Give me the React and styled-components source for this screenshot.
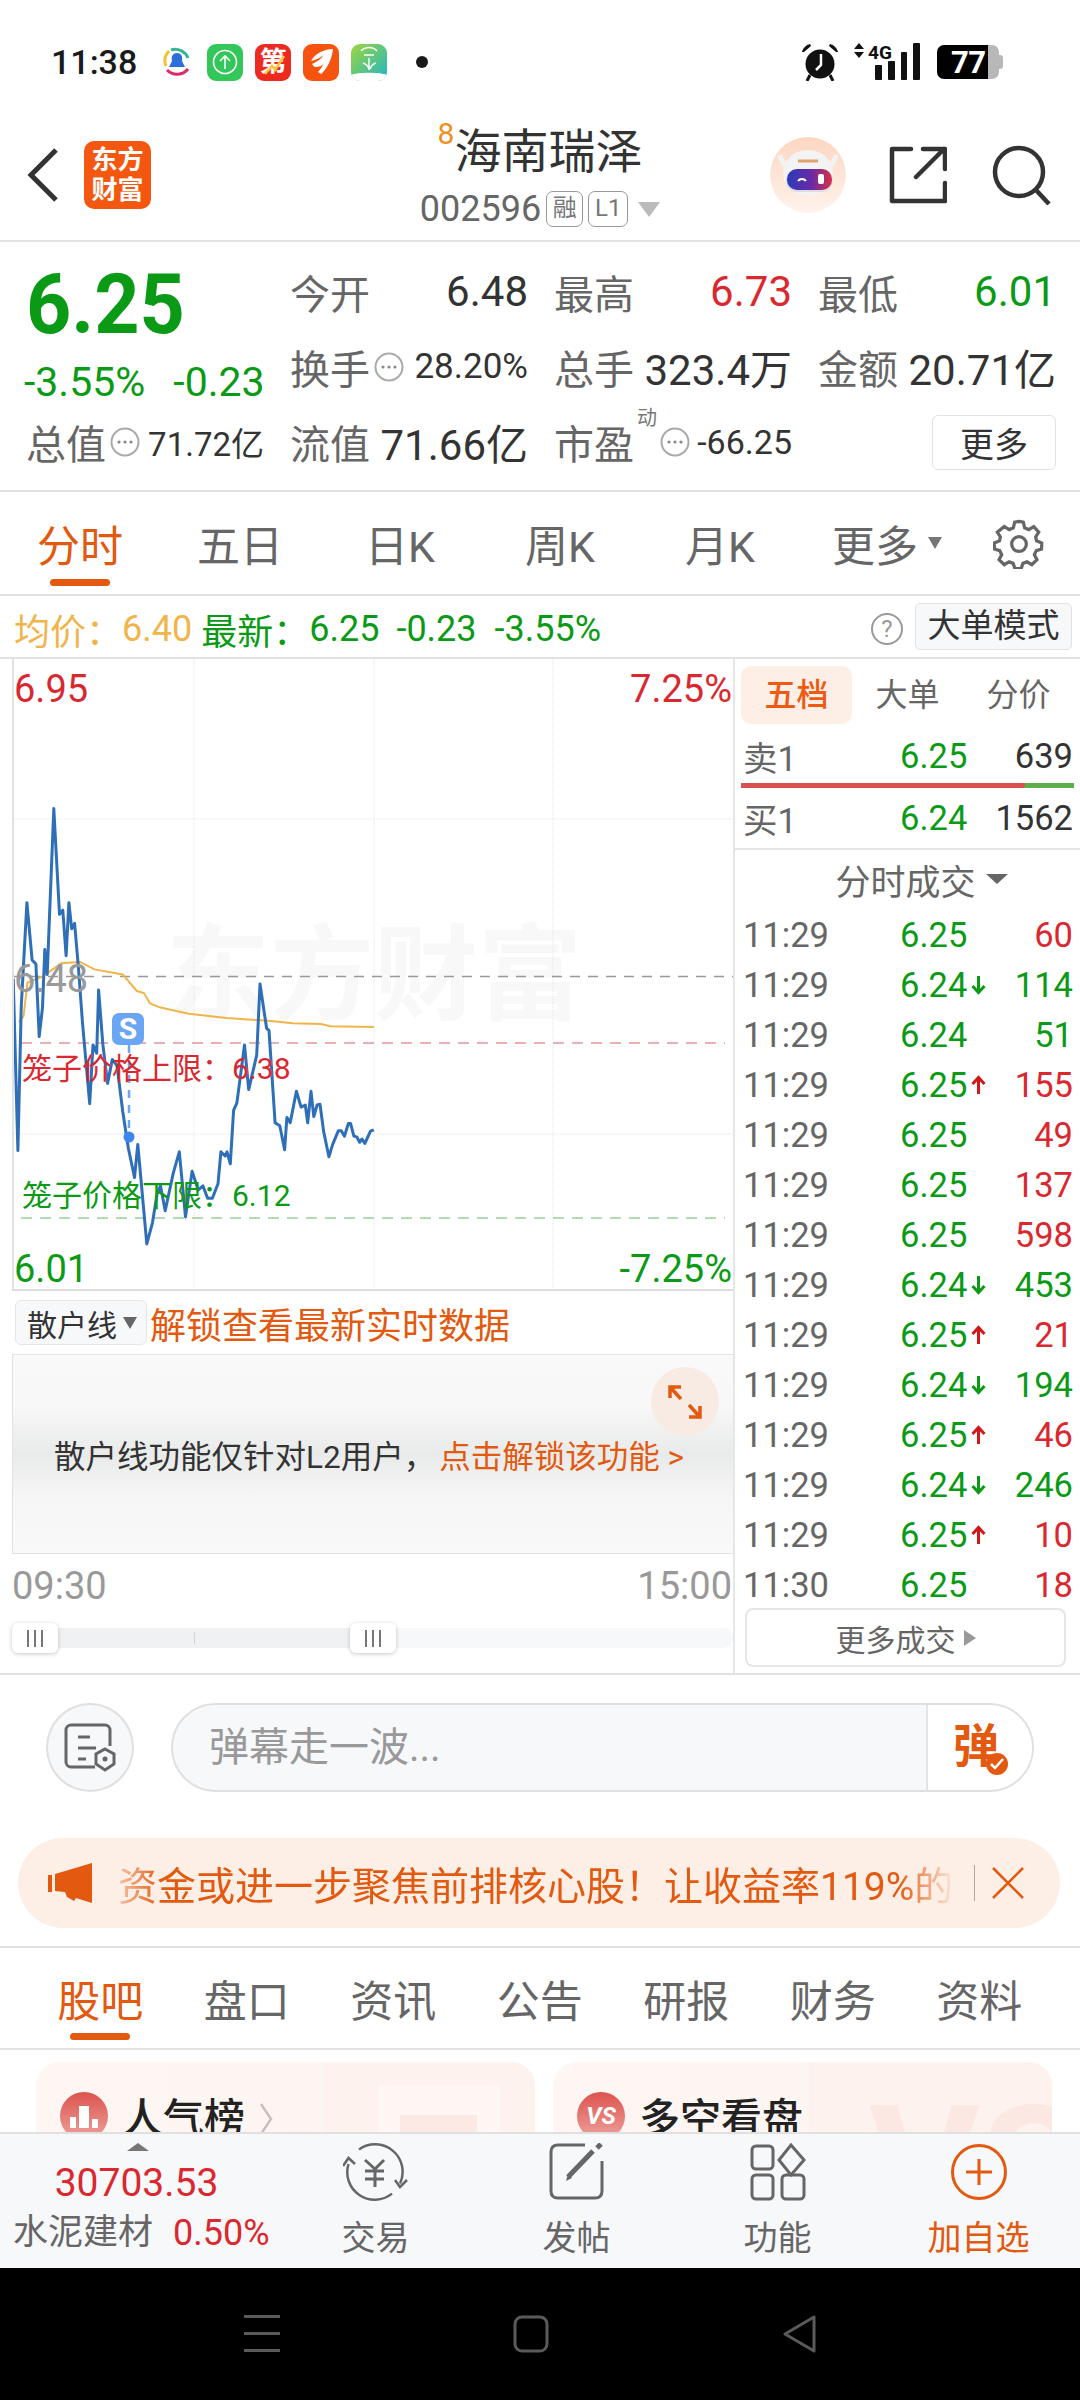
import React from "react";
import styled, { createGlobalStyle } from "styled-components";

const GREEN = "#0b9a16";
const RED = "#d9282f";
const ORANGE = "#e2590f";

const GlobalStyle = createGlobalStyle`
  html, body {
    margin: 0;
    padding: 0;
    background: #fff;
  }
  body {
    font-family: Roboto, "Noto Sans CJK SC", sans-serif;
  }
  * { box-sizing: border-box; }
`;

const Page = styled.div`
  width: 1080px;
  height: 2400px;
  display: flex;
  flex-direction: column;
  overflow: hidden;
  background: #fff;
  color: #333;
`;

/* status bar */
const StatusBar = styled.div`
  height: 110px;
  padding: 14px 81px 0 51px;
  display: flex;
  align-items: center;
`;

const Clock = styled.span`
  font-size: 34px;
  font-weight: 500;
  color: #1a1a1a;
  width: 112px;
`;

const NotifyIcons = styled.div`
  display: flex;
  align-items: center;
  gap: 12px;
`;

const ChatIcon = styled.svg`
  margin-right: 4px;
`;

const NotifyIcon = styled.div`
  position: relative;
  width: 36px;
  height: 37px;
  border-radius: 9px;
  background: ${(p) => p.$bg};
  display: flex;
  align-items: center;
  justify-content: center;
  overflow: hidden;
`;

const NotifyChar = styled.span`
  color: #fff;
  font-size: 27px;
  font-weight: 700;
  line-height: 37px;
`;

const NotifySlash = styled.svg`
  position: absolute;
  left: 8px;
  top: 10px;
`;

const NotifyDot = styled.div`
  width: 12px;
  height: 12px;
  margin-left: 17px;
  border-radius: 50%;
  background: #1a1a1a;
`;

const StatusRight = styled.div`
  margin-left: auto;
  display: flex;
  align-items: center;
  gap: 15px;
`;

const Battery = styled.div`
  position: relative;
  width: 62px;
  height: 34px;
  margin-left: 2px;
  border-radius: 7px;
  background: linear-gradient(to right, #000 82%, #b8b8b8 82%);
  color: #fff;
  font-size: 31px;
  font-weight: 700;
  padding-left: 14px;
  line-height: 35px;
  letter-spacing: -0.5px;
  &::after {
    content: "";
    position: absolute;
    right: -4px;
    top: 10px;
    width: 4px;
    height: 14px;
    border-radius: 0 3px 3px 0;
    background: #b8b8b8;
  }
`;

/* header */
const Header = styled.div`
  height: 132px;
  display: grid;
  grid-template-columns: 1fr auto 1fr;
  align-items: center;
  border-bottom: 2px solid #e2e2e2;
`;

const HeaderLeft = styled.div`
  display: flex;
  align-items: center;
  padding-left: 26px;
  gap: 24px;
`;

const Logo = styled.div`
  width: 67px;
  height: 68px;
  border-radius: 10px;
  background: #f4570f;
  color: #fff;
  font-size: 26px;
  font-weight: 700;
  line-height: 30px;
  text-align: center;
  padding: 4px 4px;
`;

const TitleBlock = styled.div`
  display: flex;
  flex-direction: column;
  align-items: center;
`;

const Title = styled.div`
  display: flex;
  align-items: flex-start;
  font-size: 47px;
  line-height: 62px;
  color: #333;
  sup {
    font-size: 30px;
    line-height: 30px;
    color: #ef8f22;
    margin-top: -2px;
  }
`;

const CodeRow = styled.div`
  display: flex;
  align-items: center;
  gap: 5px;
  margin-top: 6px;
  color: #666;
  font-size: 36px;
  line-height: 40px;
`;

const CodeBadge = styled.span`
  height: 36px;
  min-width: ${(p) => p.$w || 37}px;
  border: 1.5px solid #999;
  border-radius: 7px;
  font-size: 24px;
  line-height: 33px;
  text-align: center;
  color: #777;
`;

const DownTriangle = styled.span`
  width: 0;
  height: 0;
  margin-left: ${(p) => p.$gap || 0}px;
  border-left: ${(p) => p.$w || 11}px solid transparent;
  border-right: ${(p) => p.$w || 11}px solid transparent;
  border-top: ${(p) => p.$h || 15}px solid ${(p) => p.$color || "#bbb"};
`;

const HeaderRight = styled.div`
  display: flex;
  align-items: center;
  justify-content: flex-end;
  padding-right: 28px;
  gap: 43px;
`;

const SearchIcon = styled.svg`
  margin-left: 2px;
`;

/* quote */
const Quote = styled.div`
  height: 250px;
  padding: 12px 0 0 26px;
  display: grid;
  grid-template-columns: repeat(4, 238px);
  grid-auto-rows: 75px;
  column-gap: 26px;
  border-bottom: 2px solid #e2e2e2;
`;

const PriceBlock = styled.div`
  grid-row: 1 / 3;
  display: flex;
  flex-direction: column;
`;

const BigPrice = styled.div`
  font-size: 79px;
  font-weight: 700;
  color: ${GREEN};
  line-height: 90px;
  margin-top: 5px;
  transform: scaleY(1.06);
  transform-origin: left center;
`;

const ChangeRow = styled.div`
  display: flex;
  gap: 28px;
  margin: 9px 0 0 -2px;
  font-size: 41px;
  line-height: 48px;
  color: ${GREEN};
`;

const Stat = styled.div`
  display: flex;
  align-items: center;
  gap: 4px;
  height: 75px;
`;

const StatLabel = styled.span`
  font-size: 40px;
  color: #666;
  white-space: nowrap;
  position: relative;
`;

const StatValue = styled.span`
  margin-left: auto;
  font-size: ${(p) => p.$size || 42}px;
  color: ${(p) => p.$color || "#333"};
  white-space: nowrap;
`;

const DynamicMark = styled.sup`
  position: absolute;
  left: 83px;
  top: -6px;
  font-size: 20px;
  line-height: 22px;
  color: #777;
`;

const MarkSpacer = styled.span`
  width: 18px;
`;

const MoreButton = styled.button`
  width: 124px;
  height: 55px;
  margin-left: auto;
  margin-top: 1px;
  background: #fff;
  border: 1.5px solid #e2e2e2;
  border-radius: 6px;
  font: inherit;
  font-size: 34px;
  color: #333;
  padding: 0;
`;

/* period tabs */
const PeriodTabs = styled.div`
  height: 104px;
  display: flex;
  align-items: center;
  border-bottom: 2px solid #e2e2e2;
`;

const TabGrid = styled.div`
  display: grid;
  grid-template-columns: repeat(6, 160px);
  height: 100%;
`;

const Tab = styled.div`
  position: relative;
  display: flex;
  align-items: center;
  justify-content: center;
  gap: 10px;
  padding-left: ${(p) => p.$shift || 0}px;
  font-size: 43px;
  color: ${(p) => (p.$active ? ORANGE : "#666")};
`;

const TabLine = styled.span`
  position: absolute;
  left: 50%;
  bottom: ${(p) => p.$bottom}px;
  width: 60px;
  height: 7px;
  margin-left: -30px;
  border-radius: 4px;
  background: ${ORANGE};
`;

const GearWrap = styled.div`
  margin-left: 33px;
  display: flex;
`;

/* info row */
const InfoRow = styled.div`
  height: 63px;
  padding: 4px 8px 0 14px;
  display: flex;
  align-items: center;
  font-size: 36px;
  border-bottom: 2px solid #e2e2e2;
`;

const InfoText = styled.span`
  color: ${(p) => p.$color};
  margin-right: ${(p) => p.$gap || 0}px;
  white-space: nowrap;
`;

const HelpIcon = styled.span`
  margin-left: auto;
  width: 32px;
  height: 32px;
  border: 2px solid #999;
  border-radius: 50%;
  color: #999;
  font-size: 24px;
  line-height: 28px;
  text-align: center;
`;

const ModeButton = styled.div`
  width: 157px;
  height: 47px;
  margin: -4px 0 0 12px;
  border: 1.5px solid #e2e2e2;
  border-radius: 5px;
  background: #f7f8fa;
  color: #333;
  font-size: 33px;
  line-height: 44px;
  text-align: center;
`;

/* chart + trade panel */
const Main = styled.div`
  height: 1016px;
  display: flex;
  border-bottom: 2px solid #e2e2e2;
`;

const LeftCol = styled.div`
  width: 735px;
  padding-left: 12px;
  display: flex;
  flex-direction: column;
`;

const Chart = styled.div`
  position: relative;
  height: 632px;
  border-left: 2px solid #e2e2e2;
  border-bottom: 2px solid #dcdcdc;
  overflow: hidden;
`;

const ChartSvg = styled.svg`
  position: absolute;
  left: -2px;
  top: 0;
`;

const Watermark = styled.div`
  position: absolute;
  left: 152px;
  top: 262px;
  font-size: 104px;
  font-weight: 700;
  line-height: 112px;
  color: #f8f8f8;
  white-space: nowrap;
`;

const ChartPrice = styled.span`
  position: absolute;
  top: ${(p) => p.$top}px;
  ${(p) => (p.$right ? "right: 1px;" : "left: 0;")}
  font-size: 38px;
  line-height: 44px;
  color: ${(p) => p.$color};
`;

const CageLabel = styled.span`
  position: absolute;
  left: 8px;
  top: ${(p) => p.$top}px;
  font-size: 30px;
  line-height: 36px;
  color: ${(p) => p.$color};
  white-space: nowrap;
`;

const SMark = styled.div`
  position: absolute;
  left: 98px;
  top: 354px;
  width: 32px;
  height: 32px;
  border-radius: 7px;
  background: #6aa6f4;
  color: #fff;
  font-size: 30px;
  font-weight: 700;
  line-height: 32px;
  text-align: center;
`;

const SubRow = styled.div`
  height: 63px;
  display: flex;
  align-items: center;
  gap: 3px;
  padding-left: 3px;
`;

const SubSelect = styled.div`
  width: 132px;
  height: 45px;
  display: flex;
  align-items: center;
  justify-content: space-between;
  padding: 0 9px 0 11px;
  border: 1px solid #e6e6e6;
  border-radius: 6px;
  background: #f7f8fa;
  font-size: 30px;
`;

const UnlockText = styled.span`
  font-size: 36px;
  color: ${ORANGE};
`;

const LockPanel = styled.div`
  position: relative;
  height: 200px;
  display: flex;
  align-items: center;
  padding: 0 0 0 41px;
  border: 1px solid #e2e2e2;
  border-right: none;
  background:
    linear-gradient(to bottom, #f8f9f8 0%, #f7f8f7 25%, #e9eaea 50%, #f6f6f6 72%, #f9f9f9 100%);
  font-size: 31.5px;
  color: #333;
  white-space: nowrap;
`;

const LockLink = styled.span`
  margin-left: 4px;
  color: ${ORANGE};
`;

const ExpandBadge = styled.div`
  position: absolute;
  top: 12px;
  right: 14px;
  width: 68px;
  height: 69px;
  border-radius: 50%;
  background: #f8ebe3;
  display: flex;
  align-items: center;
  justify-content: center;
`;

const TimeRow = styled.div`
  height: 60px;
  display: flex;
  align-items: center;
  justify-content: space-between;
  padding: 3px 1px 0 0;
  font-size: 38px;
  color: #999;
`;

const Slider = styled.div`
  position: relative;
  height: 20px;
  margin-top: 14px;
  border-radius: 10px;
  background: linear-gradient(to right, #f0f1f3 48%, #f7f8fa 48%);
`;

const SliderTick = styled.span`
  position: absolute;
  left: 182px;
  top: 4px;
  width: 1px;
  height: 12px;
  background: #d4d4d4;
`;

const SliderHandle = styled.div`
  position: absolute;
  left: ${(p) => p.$left}px;
  top: -5px;
  width: 46px;
  height: 30px;
  border-radius: 6px;
  background: #fff;
  box-shadow: 0 1px 4px rgba(0, 0, 0, 0.22);
  display: flex;
  align-items: center;
  justify-content: center;
  gap: 5px;
  i {
    width: 2px;
    height: 17px;
    background: #777;
  }
`;

const RightCol = styled.div`
  flex: 1;
  display: flex;
  flex-direction: column;
  border-left: 2px solid #e6e6e6;
  padding: 0 6px 0 6px;
`;

const BookTabs = styled.div`
  display: grid;
  grid-template-columns: repeat(3, 111px);
  padding-top: 7px;
  height: 71px;
`;

const BookTab = styled.div`
  height: 58px;
  border-radius: 10px;
  background: ${(p) => (p.$active ? "#fdeee6" : "transparent")};
  color: ${(p) => (p.$active ? "#ee5a12" : "#666")};
  font-size: 32px;
  font-weight: ${(p) => (p.$active ? 500 : 400)};
  line-height: 58px;
  text-align: center;
`;

const BookRow = styled.div`
  height: ${(p) => p.$h}px;
  display: grid;
  grid-template-columns: 157px 1fr auto;
  align-items: center;
  padding: 0 1px 0 2px;
  font-size: 34.5px;
  color: #333;
`;

const BookLabel = styled.span`
  color: #666;
`;

const BookPrice = styled.span`
  color: ${GREEN};
`;

const BookBar = styled.div`
  height: 5px;
  margin-top: 1px;
  background: linear-gradient(105deg, #d9504f 85%, #5cad4e 85%);
`;

const TradeHeading = styled.div`
  height: 60px;
  margin: 0 -6px;
  border-top: 2px solid #e6e6e6;
  display: flex;
  align-items: center;
  justify-content: center;
  gap: 10px;
  padding-left: 28px;
  font-size: 35px;
  color: #666;
`;

const TradeList = styled.div`
  display: flex;
  flex-direction: column;
  gap: 10px;
  padding-top: 7px;
  height: 700px;
`;

const TradeRow = styled.div`
  height: 40px;
  display: grid;
  grid-template-columns: 157px 1fr auto;
  align-items: center;
  padding: 0 1px 0 2px;
  font-size: 34.5px;
`;

const TradeTime = styled.span`
  color: #666;
`;

const TradePrice = styled.span`
  display: flex;
  align-items: center;
  gap: 4px;
  color: ${GREEN};
`;

const TradeVolume = styled.span`
  color: ${(p) => (p.$up ? RED : GREEN)};
`;

const MoreTrades = styled.div`
  height: 59px;
  margin: 0 0 0 4px;
  width: 321px;
  border: 2px solid #e6e6e6;
  border-radius: 8px;
  display: flex;
  align-items: center;
  justify-content: center;
  gap: 8px;
  font-size: 30px;
  color: #666;
`;

const RightTriangle = styled.span`
  width: 0;
  height: 0;
  border-top: 8px solid transparent;
  border-bottom: 8px solid transparent;
  border-left: 12px solid #999;
`;

/* danmu */
const DanmuRow = styled.div`
  height: 153px;
  display: flex;
  align-items: flex-start;
  padding: 28px 46px 0;
  gap: 37px;
`;

const RoundIcon = styled.div`
  width: 88px;
  height: 89px;
  flex: none;
  border: 2px solid #e0e0e0;
  border-radius: 50%;
  background: #f7f8fa;
  display: flex;
  align-items: center;
  justify-content: center;
`;

const DanmuInput = styled.div`
  width: 863px;
  height: 89px;
  display: flex;
  border: 2px solid #e0e0e0;
  border-radius: 45px;
  background: #f7f8fa;
  overflow: hidden;
`;

const DanmuPlaceholder = styled.div`
  flex: 1;
  padding-left: 36px;
  font-size: 40px;
  line-height: 85px;
  color: #999;
`;

const DanmuSend = styled.div`
  width: 106px;
  border-left: 2px solid #e4e4e4;
  background: #fff;
  position: relative;
  color: ${ORANGE};
  font-size: 46px;
  font-weight: 700;
  line-height: 82px;
  padding-left: 25px;
`;

const SendCheck = styled.span`
  position: absolute;
  left: 58px;
  top: 48px;
  width: 22px;
  height: 22px;
  border-radius: 50%;
  background: ${ORANGE};
  display: flex;
  align-items: center;
  justify-content: center;
`;

/* banner */
const Banner = styled.div`
  height: 90px;
  margin: 10px 20px 0 18px;
  display: flex;
  align-items: center;
  padding-left: 30px;
  border-radius: 45px;
  background: #fdeee6;
`;

const BannerText = styled.div`
  width: 832px;
  margin-left: 25px;
  overflow: hidden;
  white-space: nowrap;
  font-size: 39px;
  color: ${ORANGE};
  -webkit-mask-image: linear-gradient(to right, rgba(0, 0, 0, 0.3) 0, #000 44px, #000 780px, rgba(0, 0, 0, 0.1) 832px);
  mask-image: linear-gradient(to right, rgba(0, 0, 0, 0.3) 0, #000 44px, #000 780px, rgba(0, 0, 0, 0.1) 832px);
`;

const BannerClose = styled.div`
  margin-left: 24px;
  height: 36px;
  padding-left: 16px;
  border-left: 1.5px solid #b5a59b;
  display: flex;
  align-items: center;
`;

/* section tabs */
const SectionTabs = styled.div`
  height: 104px;
  margin-top: 18px;
  padding-left: 27px;
  display: grid;
  grid-template-columns: repeat(7, 146.5px);
  border-top: 2px solid #e2e2e2;
  border-bottom: 2px solid #e2e2e2;
`;

/* cards */
const CardsArea = styled.div`
  flex: 1;
  min-height: 0;
  overflow: hidden;
  padding: 12px 28px 0 36px;
  display: grid;
  grid-template-columns: 499px 499px;
  column-gap: 18px;
`;

const Card = styled.div`
  height: 100px;
  border-radius: 24px 24px 0 0;
  padding: 30px 0 0 24px;
  background: linear-gradient(to right, #fdf6f3, #fdf4f1);
  display: flex;
  align-items: flex-start;
  gap: 14px;
  position: relative;
  overflow: hidden;
`;

const CardGhost = styled.div`
  position: absolute;
  right: 0;
  top: 0;
  width: ${(p) => p.$w}px;
  height: 100%;
  background: #fdf2ee;
`;

const GhostSquare = styled.div`
  position: absolute;
  left: ${(p) => p.$left}px;
  top: ${(p) => p.$top}px;
  width: ${(p) => p.$w}px;
  height: 60px;
  background: ${(p) => p.$bg};
`;

const GhostMark = styled.div`
  position: absolute;
  left: 316px;
  top: 22px;
  height: 78px;
  overflow: hidden;
  font-size: 170px;
  font-weight: 700;
  line-height: 170px;
  color: #fbe8e3;
`;

const CardIcon = styled.div`
  width: 48px;
  height: 48px;
  flex: none;
  border-radius: 50%;
  background: linear-gradient(to bottom, #dc534e, #eea29c);
  color: #fff;
  font-size: 24px;
  font-weight: 700;
  font-style: italic;
  line-height: 46px;
  text-align: center;
  display: flex;
  align-items: center;
  justify-content: center;
  z-index: 1;
`;

const CardTitle = styled.div`
  margin-top: 3px;
  font-size: 41px;
  font-weight: 500;
  line-height: 48px;
  color: #222;
  z-index: 1;
  display: flex;
  gap: 14px;
  align-items: center;
`;

/* bottom bar */
const BottomBar = styled.div`
  height: 136px;
  flex: none;
  display: grid;
  grid-template-columns: 275px repeat(4, 201px);
  border-top: 2px solid #e0e0e0;
  background: #f7f8fa;
`;

const IndexBlock = styled.div`
  position: relative;
  padding: 26px 0 0 13px;
  text-align: center;
  white-space: nowrap;
`;

const IndexUp = styled.span`
  position: absolute;
  left: 127px;
  top: 9px;
  width: 0;
  height: 0;
  border-left: 11px solid transparent;
  border-right: 11px solid transparent;
  border-bottom: 8px solid #777;
`;

const IndexValue = styled.div`
  font-size: 39px;
  line-height: 46px;
  color: ${RED};
  padding-right: 15px;
`;

const IndexName = styled.div`
  display: flex;
  align-items: center;
  gap: 20px;
  margin-top: 3px;
  font-size: 35px;
  line-height: 48px;
  color: #666;
  span {
    color: ${RED};
    font-size: 36px;
  }
`;

const ActionItem = styled.div`
  display: flex;
  flex-direction: column;
  align-items: center;
  padding-top: 9px;
  font-size: 34px;
  color: ${(p) => (p.$active ? ORANGE : "#666")};
  span {
    margin-top: 14px;
    line-height: 46px;
  }
`;

const ActionIcon = styled.svg`
  display: block;
`;

/* nav bar */
const NavBar = styled.div`
  height: 132px;
  flex: none;
  background: #000;
  display: flex;
  align-items: center;
  padding: 0 0 0 244px;
  gap: 233px;
`;

const trades = [
  ["11:29", "6.25", "", "60", 1],
  ["11:29", "6.24", "d", "114", 0],
  ["11:29", "6.24", "", "51", 0],
  ["11:29", "6.25", "u", "155", 1],
  ["11:29", "6.25", "", "49", 1],
  ["11:29", "6.25", "", "137", 1],
  ["11:29", "6.25", "", "598", 1],
  ["11:29", "6.24", "d", "453", 0],
  ["11:29", "6.25", "u", "21", 1],
  ["11:29", "6.24", "d", "194", 0],
  ["11:29", "6.25", "u", "46", 1],
  ["11:29", "6.24", "d", "246", 0],
  ["11:29", "6.25", "u", "10", 1],
  ["11:30", "6.25", "", "18", 1],
];

// read off the reference crop, converted to page px by toPage below
const priceLine = [
  [28, 790], [38, 1205], [45, 860], [57, 607], [68, 745], [76, 755], [83, 930], [90, 860], [95, 720], [100, 780],
  [114, 380], [126, 635], [133, 625], [140, 735], [146, 607], [152, 670], [158, 657], [166, 760], [175, 900],
  [190, 1092], [197, 950], [205, 970], [209, 818], [218, 950], [228, 1043], [238, 985], [248, 1000], [260, 1110],
  [272, 1200], [285, 1270], [292, 1190], [311, 1430], [323, 1380], [333, 1310], [340, 1290], [350, 1350],
  [367, 1260], [380, 1208], [393, 1365], [407, 1255], [420, 1300], [430, 1290], [440, 1320], [450, 1320],
  [462, 1285], [468, 1208], [477, 1218], [481, 1208], [488, 1237], [495, 1108], [502, 1090], [518, 950],
  [527, 1058], [544, 975], [551, 803], [565, 910], [570, 915], [583, 1138], [593, 1145], [603, 1203], [608, 1125],
  [615, 1138], [628, 1062], [638, 1100], [647, 1095], [652, 1138], [659, 1062], [665, 1123], [672, 1095],
  [678, 1093], [686, 1160], [697, 1220], [705, 1190], [717, 1157], [723, 1157], [730, 1170], [738, 1140],
  [743, 1140], [750, 1170], [756, 1172], [762, 1185], [767, 1177], [773, 1188], [785, 1158], [792, 1155],
];

const avgLine = [
  [40, 895], [50, 880], [58, 800], [90, 785], [130, 753], [170, 750], [200, 768], [260, 780], [290, 820], [305, 825],
  [318, 850], [340, 860], [400, 875], [480, 885], [580, 893], [620, 898], [680, 900], [700, 905], [792, 907],
];

const toPage = ([x, y]) => `${(x / 2.119).toFixed(1)},${(650 + y / 2.412).toFixed(1)}`;

const InfoDots = ({ size = 30 }) => (
  <svg width={size} height={size} viewBox="0 0 30 30">
    <circle cx="15" cy="15" r="13.5" fill="none" stroke="#aaa" strokeWidth="2" />
    <circle cx="9" cy="15" r="1.6" fill="#888" />
    <circle cx="15" cy="15" r="1.6" fill="#888" />
    <circle cx="21" cy="15" r="1.6" fill="#888" />
  </svg>
);

const TradeArrow = ({ up }) => (
  <svg width="15" height="20" viewBox="0 0 15 20">
    {up ? (
      <path d="M7.5 19V3M1.5 9l6-6.5 6 6.5" fill="none" stroke="#d01818" strokeWidth="3" />
    ) : (
      <path d="M7.5 1v16M1.5 11l6 6.5 6-6.5" fill="none" stroke={GREEN} strokeWidth="3" />
    )}
  </svg>
);

const PriceChart = () => (
  <ChartSvg width="723" height="632" viewBox="12 658 723 632">
    <g stroke="#e4e4e4" strokeWidth="1" strokeDasharray="1 1">
      <line x1="194" y1="658" x2="194" y2="1290" />
      <line x1="374" y1="658" x2="374" y2="1290" />
      <line x1="553" y1="658" x2="553" y2="1290" />
      <line x1="12" y1="818" x2="735" y2="818" />
      <line x1="12" y1="1133" x2="735" y2="1133" />
    </g>
    <line x1="12" y1="975.5" x2="735" y2="975.5" stroke="#999" strokeWidth="1.5" strokeDasharray="10 8" />
    <line x1="21" y1="1042" x2="725" y2="1042" stroke="#d9606a" strokeWidth="1.2" strokeDasharray="11 8" />
    <line x1="21" y1="1217" x2="725" y2="1217" stroke="#68b56e" strokeWidth="1.2" strokeDasharray="11 8" />
    <polyline points={avgLine.map(toPage).join(" ")} fill="none" stroke="#f0b54a" strokeWidth="2" />
    <polyline points={priceLine.map(toPage).join(" ")} fill="none" stroke="#2f6fb8" strokeWidth="3" strokeLinejoin="round" />
    <line x1="129" y1="1044" x2="129" y2="1136" stroke="#6aa6f4" strokeWidth="2.5" strokeDasharray="8 7" />
    <circle cx="129" cy="1136" r="5.5" fill="#3c86ee" />
  </ChartSvg>
);

const StatusIcons = () => (
  <NotifyIcons>
    <ChatIcon width="28" height="37" viewBox="0 0 28 37">
      <path d="M8 6a14 14 0 0 1 17 8" fill="none" stroke="#35b59a" strokeWidth="3" />
      <path d="M6 7a14 14 0 0 0-3 15" fill="none" stroke="#f2c230" strokeWidth="3" />
      <path d="M4 26a14 14 0 0 0 21-1" fill="none" stroke="#d92b6b" strokeWidth="3" />
      <path d="M14 9c4 0 6 3 5 8l3 6H6l3-6c-1-5 1-8 5-8z" fill="#2d6fd8" />
    </ChatIcon>
    <NotifyIcon $bg="#33c659">
      <svg width="26" height="26" viewBox="0 0 26 26" fill="none" stroke="#fff" strokeWidth="1.6">
        <circle cx="13" cy="13" r="11.5" />
        <path d="M13 20V7M8 12l5-5 5 5" />
      </svg>
    </NotifyIcon>
    <NotifyIcon $bg="#ec2a1f">
      <NotifyChar>第</NotifyChar>
      <NotifySlash width="26" height="22" viewBox="0 0 26 22" fill="none" stroke="#ffc63a" strokeWidth="2.5">
        <path d="M2 20l7-8 3 4 9-14" />
      </NotifySlash>
    </NotifyIcon>
    <NotifyIcon $bg="#f5530f">
      <svg width="30" height="30" viewBox="0 0 30 30" fill="#fff">
        <path d="M27 2C19 2 9 6 5 14c5-1 9-3 13-6-3 4-7 7-12 9 1 1 2 3 4 3 3 0 6-1 8-4-2 4-4 7-6 9l3 2c6-5 11-15 12-25z" />
      </svg>
    </NotifyIcon>
    <NotifyIcon $bg="linear-gradient(135deg, #9dd63a, #20b5c8)">
      <svg width="36" height="37" viewBox="0 0 36 37" fill="none" stroke="#fff" strokeWidth="1.4">
        <path d="M10 7a11 11 0 0 1 16 0M13 11h10M18 14v12M12 19c3 1 5 3 6 6M25 19c-3 1-5 3-6 6" />
        <path d="M0 31c6-3 30-3 36 0v6H0z" fill="#fff" stroke="none" />
      </svg>
    </NotifyIcon>
    <NotifyDot />
  </NotifyIcons>
);

const StatusRightIcons = () => (
  <StatusRight>
    <svg width="38" height="38" viewBox="0 0 38 38">
      <circle cx="19" cy="21" r="14.5" fill="#111" />
      <path d="M20 11v11l-5 5" fill="none" stroke="#fff" strokeWidth="2.5" />
      <path d="M1 9c1-4 4-7 8-8l1 2-7 6zM37 9c-1-4-4-7-8-8l-1 2 7 6z" fill="#111" />
      <path d="M9 32l-3 6M29 32l3 6" fill="none" stroke="#111" strokeWidth="3" />
    </svg>
    <svg width="66" height="38" viewBox="0 0 66 38">
      <path d="M0 6l5-6 5 6zM0 9l5 6 5-6z" fill="#111" />
      <rect x="21" y="22" width="7" height="15" rx="1" fill="#111" />
      <rect x="34" y="18" width="7" height="19" rx="1" fill="#111" />
      <rect x="47" y="9" width="6" height="28" rx="1" fill="#111" />
      <rect x="59" y="0" width="7" height="37" rx="1" fill="#111" />
      <text x="14" y="16" fontSize="19" fontWeight="700" fill="#111" fontFamily="Roboto" textLength="24" lengthAdjust="spacingAndGlyphs">4G</text>
    </svg>
    <Battery>77</Battery>
  </StatusRight>
);

const RobotAvatar = () => (
  <svg width="76" height="76" viewBox="0 0 76 76">
    <defs>
      <linearGradient id="avatarBg" x1="0" y1="0" x2="0" y2="1">
        <stop offset="0" stopColor="#fcd6c2" />
        <stop offset="1" stopColor="#fef3ec" />
      </linearGradient>
      <linearGradient id="visor" x1="0" y1="0" x2="1" y2="0">
        <stop offset="0" stopColor="#2b3bb8" />
        <stop offset="0.55" stopColor="#6a2aa6" />
        <stop offset="1" stopColor="#d8304a" />
      </linearGradient>
    </defs>
    <circle cx="38" cy="38" r="38" fill="url(#avatarBg)" />
    <path d="M10 18c1 6 4 10 8 12M66 18c-1 6-4 10-8 12" fill="none" stroke="#f4f2f0" strokeWidth="5" />
    <ellipse cx="38" cy="36" rx="25" ry="23" fill="#f4f3f4" />
    <path d="M28 24h20" stroke="#e3a070" strokeWidth="3" />
    <rect x="16" y="32" width="46" height="23" rx="11" fill="#dcdce2" />
    <rect x="17" y="32" width="45" height="21" rx="10" fill="url(#visor)" />
    <path d="M28 44a5 5 0 0 1 8 0" fill="none" stroke="#fff" strokeWidth="2" />
    <rect x="48" y="37" width="6" height="10" rx="2" fill="#fff" />
  </svg>
);

const App = () => (
  <>
    <GlobalStyle />
    <Page>
      <StatusBar>
        <Clock>11:38</Clock>
        <StatusIcons />
        <StatusRightIcons />
      </StatusBar>

      <Header>
        <HeaderLeft>
          <svg width="34" height="56" viewBox="0 0 34 56">
            <path d="M30 3L5 28l25 25" fill="none" stroke="#333" strokeWidth="5" />
          </svg>
          <Logo>东方<br />财富</Logo>
        </HeaderLeft>
        <TitleBlock>
          <Title><sup>8</sup>海南瑞泽</Title>
          <CodeRow>
            002596
            <CodeBadge>融</CodeBadge>
            <CodeBadge $w={40}>L1</CodeBadge>
            <DownTriangle $gap={5} />
          </CodeRow>
        </TitleBlock>
        <HeaderRight>
          <RobotAvatar />
          <svg width="58" height="58" viewBox="0 0 58 58" fill="none" stroke="#333" strokeWidth="4.5" strokeLinecap="round" strokeLinejoin="round">
            <path d="M22 3H3v52h53V37" />
            <path d="M27 31L55 3M34 3h22v20" />
          </svg>
          <SearchIcon width="60" height="60" viewBox="0 0 60 60" fill="none" stroke="#333" strokeWidth="4.5">
            <circle cx="27" cy="27" r="24" />
            <path d="M44 45l13 14" />
          </SearchIcon>
        </HeaderRight>
      </Header>

      <Quote>
        <PriceBlock>
          <BigPrice>6.25</BigPrice>
          <ChangeRow><span>-3.55%</span><span>-0.23</span></ChangeRow>
        </PriceBlock>
        <Stat><StatLabel>今开</StatLabel><StatValue>6.48</StatValue></Stat>
        <Stat><StatLabel>最高</StatLabel><StatValue $color={RED}>6.73</StatValue></Stat>
        <Stat><StatLabel>最低</StatLabel><StatValue $color={GREEN}>6.01</StatValue></Stat>
        <Stat><StatLabel>换手</StatLabel><InfoDots /><StatValue $size={35}>28.20%</StatValue></Stat>
        <Stat><StatLabel>总手</StatLabel><StatValue>323.4万</StatValue></Stat>
        <Stat><StatLabel>金额</StatLabel><StatValue>20.71亿</StatValue></Stat>
        <Stat><StatLabel>总值</StatLabel><InfoDots /><StatValue $size={33}>71.72亿</StatValue></Stat>
        <Stat><StatLabel>流值</StatLabel><StatValue>71.66亿</StatValue></Stat>
        <Stat>
          <StatLabel>市盈<DynamicMark>动</DynamicMark></StatLabel>
          <MarkSpacer />
          <InfoDots />
          <StatValue $size={34}>-66.25</StatValue>
        </Stat>
        <Stat><MoreButton>更多</MoreButton></Stat>
      </Quote>

      <PeriodTabs>
        <TabGrid>
          <Tab $active>分时<TabLine $bottom={8} /></Tab>
          <Tab>五日</Tab>
          <Tab>日K</Tab>
          <Tab>周K</Tab>
          <Tab>月K</Tab>
          <Tab $shift={14}>更多<DownTriangle $w={7} $h={12} $color="#777" /></Tab>
        </TabGrid>
        <GearWrap>
          <svg width="52" height="52" viewBox="0 0 24 24" fill="none" stroke="#666" strokeWidth="1.5">
            <path d="M12 2l2 .4.6 2.6 1.9.8 2.3-1.4 2.3 2.6-1.4 2.2.4 1.8 2.4 1-.1 2.8-2.4.7-.9 1.9 1.2 2.3-2.4 2.3-2.2-1.3-1.9.7-.8 2.4h-2.9l-.8-2.4-1.9-.7-2.2 1.3-2.4-2.3 1.2-2.3-.9-1.9-2.4-.7-.1-2.8 2.4-1 .4-1.8-1.4-2.2L5.2 4.4l2.3 1.4 1.9-.8.6-2.6z" />
            <circle cx="12" cy="12.5" r="3.4" />
          </svg>
        </GearWrap>
      </PeriodTabs>

      <InfoRow>
        <InfoText $color="#f0b54a">均价：</InfoText>
        <InfoText $color="#f0b54a" $gap={9}>6.40</InfoText>
        <InfoText $color={GREEN}>最新：</InfoText>
        <InfoText $color={GREEN} $gap={17}>6.25</InfoText>
        <InfoText $color={GREEN} $gap={18}>-0.23</InfoText>
        <InfoText $color={GREEN}>-3.55%</InfoText>
        <HelpIcon>?</HelpIcon>
        <ModeButton>大单模式</ModeButton>
      </InfoRow>

      <Main>
        <LeftCol>
          <Chart>
            <Watermark>东方财富</Watermark>
            <PriceChart />
            <ChartPrice $top={8} $color={RED}>6.95</ChartPrice>
            <ChartPrice $top={8} $right $color={RED}>7.25%</ChartPrice>
            <ChartPrice $top={298} $color="#999">6.48</ChartPrice>
            <CageLabel $top={392} $color={RED}>笼子价格上限：6.38</CageLabel>
            <CageLabel $top={519} $color={GREEN}>笼子价格下限：6.12</CageLabel>
            <SMark>S</SMark>
            <ChartPrice $top={588} $color={GREEN}>6.01</ChartPrice>
            <ChartPrice $top={588} $right $color={GREEN}>-7.25%</ChartPrice>
          </Chart>
          <SubRow>
            <SubSelect>散户线<DownTriangle $w={7} $h={12} $color="#666" /></SubSelect>
            <UnlockText>解锁查看最新实时数据</UnlockText>
          </SubRow>
          <LockPanel>
            散户线功能仅针对L2用户，<LockLink>点击解锁该功能 &gt;</LockLink>
            <ExpandBadge>
              <svg width="36" height="36" viewBox="0 0 36 36" fill="none" stroke={ORANGE} strokeWidth="3.5">
                <path d="M3 14V3h11M3 3l11 12M33 22v11H22M33 33L22 21" />
              </svg>
            </ExpandBadge>
          </LockPanel>
          <TimeRow><span>09:30</span><span>15:00</span></TimeRow>
          <Slider>
            <SliderTick />
            <SliderHandle $left={0}><i /><i /><i /></SliderHandle>
            <SliderHandle $left={338}><i /><i /><i /></SliderHandle>
          </Slider>
        </LeftCol>

        <RightCol>
          <BookTabs>
            <BookTab $active>五档</BookTab>
            <BookTab>大单</BookTab>
            <BookTab>分价</BookTab>
          </BookTabs>
          <BookRow $h={52}>
            <BookLabel>卖1</BookLabel>
            <BookPrice>6.25</BookPrice>
            <span>639</span>
          </BookRow>
          <BookBar />
          <BookRow $h={60}>
            <BookLabel>买1</BookLabel>
            <BookPrice>6.24</BookPrice>
            <span>1562</span>
          </BookRow>
          <TradeHeading>分时成交<DownTriangle $w={11} $h={10} $color="#666" /></TradeHeading>
          <TradeList>
            {trades.map(([time, price, dir, volume, up], i) => (
              <TradeRow key={i}>
                <TradeTime>{time}</TradeTime>
                <TradePrice>
                  {price}
                  {dir && <TradeArrow up={dir === "u"} />}
                </TradePrice>
                <TradeVolume $up={up}>{volume}</TradeVolume>
              </TradeRow>
            ))}
          </TradeList>
          <MoreTrades>更多成交<RightTriangle /></MoreTrades>
        </RightCol>
      </Main>

      <DanmuRow>
        <RoundIcon>
          <svg width="52" height="52" viewBox="0 0 52 52" fill="none" stroke="#666" strokeWidth="3">
            <path d="M46 24V8a5 5 0 0 0-5-5H7a5 5 0 0 0-5 5v32a5 5 0 0 0 5 5h24" />
            <path d="M14 15h12M14 26h18M14 37h8" />
            <path d="M41 27l9 5v10l-9 6-9-6V32z" fill="#f7f8fa" />
            <circle cx="41" cy="37" r="2.5" fill="#666" stroke="none" />
          </svg>
        </RoundIcon>
        <DanmuInput>
          <DanmuPlaceholder>弹幕走一波...</DanmuPlaceholder>
          <DanmuSend>
            弹
            <SendCheck>
              <svg width="14" height="12" viewBox="0 0 14 12" fill="none" stroke="#fff" strokeWidth="2.5">
                <path d="M1 6l4 4 8-9" />
              </svg>
            </SendCheck>
          </DanmuSend>
        </DanmuInput>
      </DanmuRow>

      <Banner>
        <svg width="45" height="40" viewBox="0 0 45 40" fill={ORANGE}>
          <rect x="0" y="12" width="4" height="17" />
          <path d="M7 11L44 0v40l-16-5-2 3-7-4-2-5-10-1z" />
        </svg>
        <BannerText>资金或进一步聚焦前排核心股！让收益率119%的</BannerText>
        <BannerClose>
          <svg width="34" height="34" viewBox="0 0 34 34" fill="none" stroke={ORANGE} strokeWidth="2.5">
            <path d="M2 2l30 30M32 2L2 32" />
          </svg>
        </BannerClose>
      </Banner>

      <SectionTabs>
        <Tab $active>股吧<TabLine $bottom={8} /></Tab>
        <Tab>盘口</Tab>
        <Tab>资讯</Tab>
        <Tab>公告</Tab>
        <Tab>研报</Tab>
        <Tab>财务</Tab>
        <Tab>资料</Tab>
      </SectionTabs>

      <CardsArea>
        <Card>
          <CardGhost $w={210} />
          <GhostSquare $left={342} $top={23} $w={122} $bg="#fef7f4" />
          <GhostSquare $left={364} $top={53} $w={77} $bg="#fce9e4" />
          <CardIcon>
            <svg width="30" height="28" viewBox="0 0 30 28" fill="#fff">
              <rect x="1" y="15" width="6" height="11" />
              <rect x="10" y="4" width="10" height="22" />
              <rect x="23" y="17" width="6" height="9" />
            </svg>
          </CardIcon>
          <CardTitle>
            人气榜
            <svg width="14" height="34" viewBox="0 0 14 34" fill="none" stroke="#c8c0bc" strokeWidth="2.5">
              <path d="M2 2l10 15L2 32" />
            </svg>
          </CardTitle>
        </Card>
        <Card>
          <CardGhost $w={243} />
          <GhostMark>VS</GhostMark>
          <CardIcon>VS</CardIcon>
          <CardTitle>多空看盘</CardTitle>
        </Card>
      </CardsArea>

      <BottomBar>
        <IndexBlock>
          <IndexUp />
          <IndexValue>30703.53</IndexValue>
          <IndexName>水泥建材<span>0.50%</span></IndexName>
        </IndexBlock>
        <ActionItem>
          <ActionIcon width="66" height="58" viewBox="0 0 66 58" fill="none" stroke="#666" strokeWidth="2.5">
            <path d="M16 6.500A27.500 27.500 0 0 1 57 40.500" />
            <path d="M49 50.600A27.500 27.500 0 0 1 5.500 21" />
            <path d="M52 37l5 7 7-7M0 23l5.500-8 6.500 6" />
            <path d="M22 17l10 9 9-9M32 26v18M22 28h19M22 36h19" strokeWidth="3" />
          </ActionIcon>
          <span>交易</span>
        </ActionItem>
        <ActionItem>
          <ActionIcon width="56" height="58" viewBox="0 0 56 58" fill="none" stroke="#666" strokeWidth="3">
            <path d="M36 2H9Q2 2 2 9v39q0 7 7 7h37q7 0 7-7V18" />
            <path d="M19 34L44 8" strokeWidth="5" />
            <path d="M48 5l4-4" strokeWidth="5" />
            <path d="M17 38l2-7 4 4z" fill="#666" stroke="none" />
          </ActionIcon>
          <span>发帖</span>
        </ActionItem>
        <ActionItem>
          <ActionIcon width="56" height="58" viewBox="0 0 56 58" fill="none" stroke="#666" strokeWidth="3">
            <rect x="2" y="3" width="21" height="23" rx="4" />
            <path d="M41 2l13 15-13 15-12-15z" />
            <rect x="2" y="32" width="21" height="24" rx="4" />
            <rect x="32" y="32" width="22" height="24" rx="4" />
          </ActionIcon>
          <span>功能</span>
        </ActionItem>
        <ActionItem $active>
          <ActionIcon width="58" height="58" viewBox="0 0 58 58" fill="none" stroke={ORANGE} strokeWidth="3">
            <circle cx="29" cy="29" r="26.5" />
            <path d="M16 29h26M29 16v26" />
          </ActionIcon>
          <span>加自选</span>
        </ActionItem>
      </BottomBar>

      <NavBar>
        <svg width="36" height="38" viewBox="0 0 36 38" fill="#5a5a5a">
          <rect y="0" width="36" height="3" />
          <rect y="17" width="36" height="3" />
          <rect y="34" width="36" height="3" />
        </svg>
        <svg width="36" height="38" viewBox="0 0 36 38" fill="none" stroke="#5a5a5a" strokeWidth="3">
          <rect x="2" y="2" width="32" height="34" rx="7" />
        </svg>
        <svg width="34" height="38" viewBox="0 0 34 38" fill="none" stroke="#5a5a5a" strokeWidth="3" strokeLinejoin="round">
          <path d="M32 2v34L3 19z" />
        </svg>
      </NavBar>
    </Page>
  </>
);

export default App;
